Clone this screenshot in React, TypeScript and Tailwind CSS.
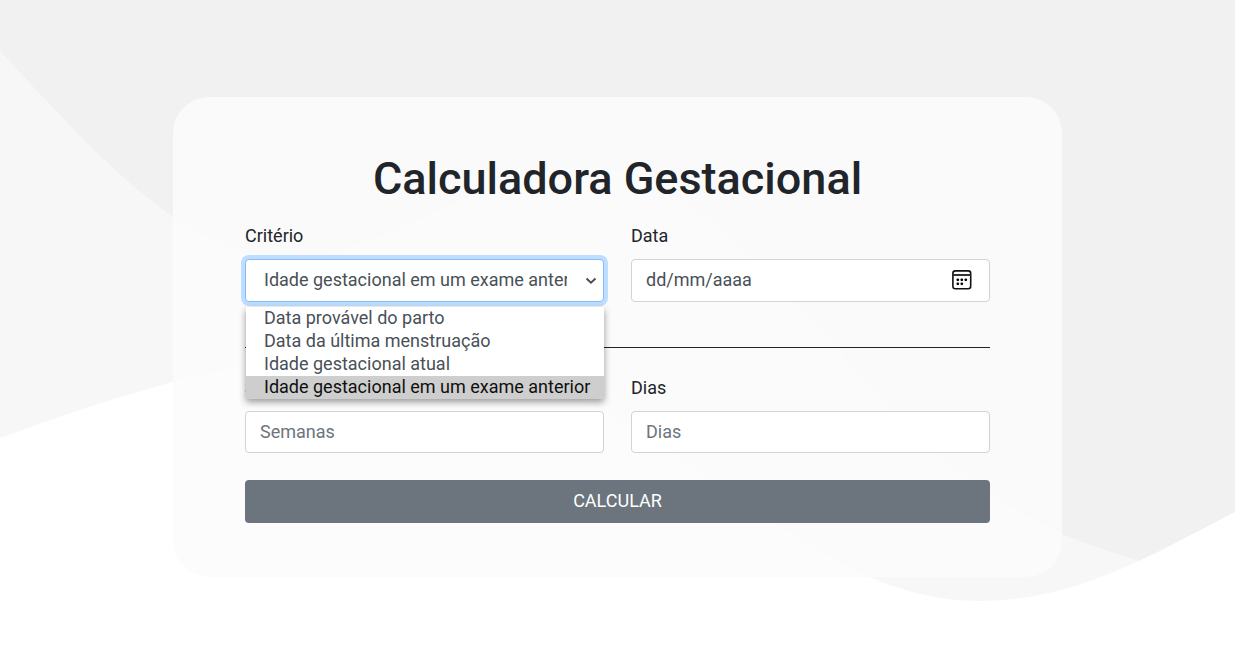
import { useState } from "react";

const CRITERIA = [
  "Data provável do parto",
  "Data da última menstruação",
  "Idade gestacional atual",
  "Idade gestacional em um exame anterior",
];

const LABEL = "mb-[10px] block leading-[27px] text-[#212529]";
const FIELD =
  "block w-full rounded border border-[#ced4da] bg-white px-[14px] pb-[2px] text-[#495057] outline-none";

function Waves() {
  return (
    <svg
      className="absolute inset-0 h-full w-full"
      viewBox="0 0 1235 668"
      preserveAspectRatio="none"
      aria-hidden="true"
    >
      <path
        fill="#f7f7f7"
        d="M0 51C60 115 110 172 173 217C215 246 250 256 292 256C390 256 480 168 590 168C720 168 860 400 959 472C992 496 1026 518 1062 534C1115 555 1170 572 1235 585V668H0Z"
      />
      <path
        fill="#fff"
        d="M0 438C60 416 120 396 173 382C210 372 250 364 290 358C470 330 590 400 694 468C790 531 870 601 980 601C1080 601 1160 550 1235 512V668H0Z"
      />
    </svg>
  );
}

function CalendarIcon() {
  return (
    <svg width="20" height="20" viewBox="0 0 20 20" aria-hidden="true">
      <rect x="0.9" y="0.9" width="17.8" height="17.8" rx="2.5" fill="none" stroke="#111" strokeWidth="1.6" />
      <path d="M1 5h17.6" stroke="#333" strokeWidth="2" />
      <g fill="#000">
        <circle cx="5.8" cy="9.8" r="1.4" />
        <circle cx="9.8" cy="9.8" r="1.4" />
        <circle cx="13.8" cy="9.8" r="1.4" />
        <circle cx="5.8" cy="13.8" r="1.4" />
        <circle cx="9.8" cy="13.8" r="1.4" />
      </g>
    </svg>
  );
}

export default function App() {
  const [criterion, setCriterion] = useState(CRITERIA[3]);
  const [open, setOpen] = useState(true);

  return (
    <div className="relative min-h-screen bg-[#f1f1f1] font-['Roboto',sans-serif] text-[18px] text-[#212529]">
      <Waves />
      <main className="relative px-4 pt-[97px] pb-16">
        <form
          className="mx-auto max-w-[889px] rounded-[36px] bg-[#fcfcfc]/85 px-[72px] pt-[55px] pb-[54px]"
          onSubmit={(e) => e.preventDefault()}
        >
          <h1 className="mb-4 text-center text-[45px] leading-[54px] font-medium">Calculadora Gestacional</h1>

          <div className="grid grid-cols-2 gap-[27px]">
            <div>
              <label htmlFor="criterio" className={LABEL}>
                Critério
              </label>
              <div className="relative">
                <select
                  id="criterio"
                  value={criterion}
                  onChange={(e) => setCriterion(e.target.value)}
                  className="block h-[43px] w-full appearance-none rounded border border-[#80bdff] bg-white pr-9 pb-[2px] pl-[18px] text-[#495057] shadow-[0_0_0_4px_#bfdeff] outline-none"
                >
                  {CRITERIA.map((c) => (
                    <option key={c}>{c}</option>
                  ))}
                </select>
                <svg
                  className="pointer-events-none absolute top-[18px] right-[7px]"
                  width="12"
                  height="8"
                  viewBox="0 0 12 8"
                  fill="none"
                  stroke="#495057"
                  strokeWidth="2"
                  aria-hidden="true"
                >
                  <path d="M1.5 1.5L6 5.7L10.5 1.5" />
                </svg>
                {open && (
                  <ul
                    role="listbox"
                    aria-label="Critério"
                    className="absolute top-[48px] right-0 left-px z-10 bg-white text-[#495057] shadow-[0_3px_7px_rgba(0,0,0,0.4)]"
                  >
                    {CRITERIA.map((c) => (
                      <li
                        key={c}
                        role="option"
                        aria-selected={c === criterion}
                        onClick={() => {
                          setCriterion(c);
                          setOpen(false);
                        }}
                        className="pb-[2px] pl-[18px] leading-[21px] whitespace-nowrap aria-selected:bg-[#cecece] aria-selected:text-[#101010]"
                      >
                        {c}
                      </li>
                    ))}
                  </ul>
                )}
              </div>
            </div>
            <div>
              <label htmlFor="data" className={LABEL}>
                Data
              </label>
              <div className="relative">
                <input
                  id="data"
                  type="text"
                  placeholder="dd/mm/aaaa"
                  className={`${FIELD} h-[43px] placeholder:text-[#495057]`}
                />
                <button type="button" aria-label="Abrir calendário" className="absolute top-[11px] right-[18px]">
                  <CalendarIcon />
                </button>
              </div>
            </div>
          </div>

          <hr className="mt-[45px] mb-[26px] border-[#212529]" />

          <div className="grid grid-cols-2 gap-[27px]">
            <div>
              <label htmlFor="semanas" className={LABEL}>
                Semanas
              </label>
              <input
                id="semanas"
                type="text"
                placeholder="Semanas"
                className={`${FIELD} h-[42px] placeholder:text-[#6c757d]`}
              />
            </div>
            <div>
              <label htmlFor="dias" className={LABEL}>
                Dias
              </label>
              <input
                id="dias"
                type="text"
                placeholder="Dias"
                className={`${FIELD} h-[42px] placeholder:text-[#6c757d]`}
              />
            </div>
          </div>

          <button type="submit" className="mt-[27px] block h-[43px] w-full rounded bg-[#6c757d] pb-[2px] text-white">
            CALCULAR
          </button>
        </form>
      </main>
    </div>
  );
}
